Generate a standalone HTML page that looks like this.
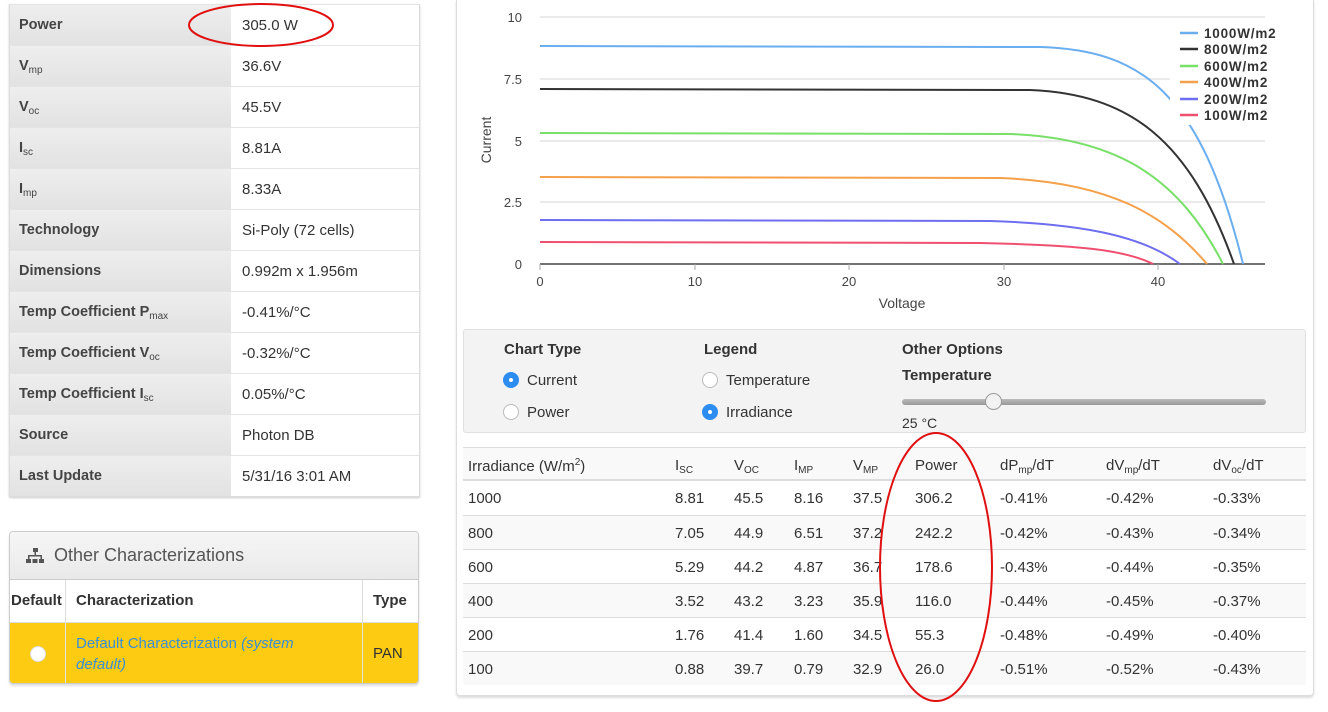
<!DOCTYPE html>
<html><head><meta charset="utf-8"><style>
*{margin:0;padding:0;box-sizing:border-box}
body{width:1328px;height:712px;background:#fff;font-family:"Liberation Sans",sans-serif;color:#333;position:relative;overflow:hidden;font-size:15px}
.a{position:absolute}
.lt{position:absolute;left:9px;top:4px;width:411px;border:1px solid #ddd;border-top:none;box-shadow:0 1px 2px #ccc}
.lt .r{height:41px;display:flex;border-top:1px solid #e4e4e4}
.lt .k{width:222px;background:linear-gradient(#eee,#e2e2e2);padding:12px 9px;font-weight:bold;color:#444;font-size:14.5px;border-right:1px solid #fff}
.lt .k sub{font-weight:normal}
.lt .v{flex:1;padding:12px 10px;font-size:15px}
sub{font-size:10px;vertical-align:-3px}
sup{font-size:10px}
.oc{position:absolute;left:9px;top:531px;width:410px;height:153px;border:1px solid #ccc;border-radius:4px;overflow:hidden;box-shadow:0 2px 2px #ddd}
.oc .h{height:48px;background:linear-gradient(#f6f6f6,#e9e9e9);border-bottom:1px solid #ccc;font-size:18px;color:#555;padding:13px 0 0 44px}
.rp{position:absolute;left:456px;top:0;width:858px;height:696px;border:1px solid #ddd;border-top:none;border-radius:0 0 4px 4px;box-shadow:0 2px 2px #ddd}
.ob{position:absolute;left:463px;top:329px;width:843px;height:104px;background:#f3f3f3;border:1px solid #e0e0e0;border-radius:3px}
.rad{position:absolute;width:16px;height:16px;border-radius:50%;border:1px solid #bbb;background:#fff}
.rad.on{background:#2d8cf0;border-color:#2d8cf0}
.rad.on:after{content:"";position:absolute;left:5px;top:5px;width:4px;height:4px;border-radius:50%;background:#fff}
.tb{position:absolute;left:463px;width:843px;height:34px;font-size:15px}
.tb span{position:absolute;top:9px}
</style></head><body>

<div class="lt">
<div class="r"><div class="k">Power</div><div class="v">305.0 W</div></div>
<div class="r"><div class="k">V<sub>mp</sub></div><div class="v">36.6V</div></div>
<div class="r"><div class="k">V<sub>oc</sub></div><div class="v">45.5V</div></div>
<div class="r"><div class="k">I<sub>sc</sub></div><div class="v">8.81A</div></div>
<div class="r"><div class="k">I<sub>mp</sub></div><div class="v">8.33A</div></div>
<div class="r"><div class="k">Technology</div><div class="v">Si-Poly (72 cells)</div></div>
<div class="r"><div class="k">Dimensions</div><div class="v">0.992m x 1.956m</div></div>
<div class="r"><div class="k">Temp Coefficient P<sub>max</sub></div><div class="v">-0.41%/°C</div></div>
<div class="r"><div class="k">Temp Coefficient V<sub>oc</sub></div><div class="v">-0.32%/°C</div></div>
<div class="r"><div class="k">Temp Coefficient I<sub>sc</sub></div><div class="v">0.05%/°C</div></div>
<div class="r"><div class="k">Source</div><div class="v">Photon DB</div></div>
<div class="r"><div class="k">Last Update</div><div class="v">5/31/16 3:01 AM</div></div>
</div>

<div class="oc">
<div class="h">Other Characterizations</div>
<svg class="a" style="left:16px;top:16px" width="18" height="16" viewBox="0 0 18 16"><rect x="7" y="0" width="5" height="4" fill="#555"/><rect x="8.5" y="4" width="1.5" height="4" fill="#555"/><rect x="2" y="7" width="14" height="1.5" fill="#555"/><rect x="2" y="7" width="1.5" height="4" fill="#555"/><rect x="14.5" y="7" width="1.5" height="4" fill="#555"/><rect x="0" y="11" width="5" height="4" fill="#555"/><rect x="6.5" y="11" width="5" height="4" fill="#555"/><rect x="13" y="11" width="5" height="4" fill="#555"/></svg>
<div class="a" style="left:0;top:48px;width:410px;height:42px;font-weight:bold;font-size:15px;color:#333">
<span class="a" style="left:1px;top:12px">Default</span>
<span class="a" style="left:66px;top:12px">Characterization</span>
<span class="a" style="left:363px;top:12px">Type</span>
<div class="a" style="left:55px;top:0;width:1px;height:42px;background:#ddd"></div>
<div class="a" style="left:352px;top:0;width:1px;height:42px;background:#ddd"></div>
</div>
<div class="a" style="left:0;top:90px;width:410px;height:63px;background:#fccb12;border-top:1px solid #ddd">
<div class="a" style="left:55px;top:0;width:1px;height:63px;background:#e6e6e6"></div>
<div class="a" style="left:352px;top:0;width:1px;height:63px;background:#e6e6e6"></div>
<div class="a" style="left:20px;top:23px;width:16px;height:16px;border-radius:50%;background:#fff;border:1px solid #ddd"></div>
<div class="a" style="left:66px;top:10px;color:#3a8fd6;font-size:15px;line-height:21px;width:250px">Default Characterization <i>(system default)</i></div>
<span class="a" style="left:363px;top:22px">PAN</span>
</div>
</div>

<div class="rp"></div>

<svg class="a" style="left:456px;top:0" width="858" height="320" viewBox="456 0 858 320" font-family="Liberation Sans, sans-serif">
<g stroke="#e3e3e3" stroke-width="1.5">
<line x1="540" y1="17" x2="1265" y2="17"/><line x1="540" y1="79" x2="1265" y2="79"/><line x1="540" y1="141" x2="1265" y2="141"/><line x1="540" y1="202" x2="1265" y2="202"/>
</g>
<line x1="540" y1="264" x2="1265" y2="264" stroke="#444" stroke-width="1.5"/>
<g stroke="#aaa"><line x1="540" y1="264" x2="540" y2="270"/><line x1="695" y1="264" x2="695" y2="270"/><line x1="849" y1="264" x2="849" y2="270"/><line x1="1004" y1="264" x2="1004" y2="270"/><line x1="1158" y1="264" x2="1158" y2="270"/></g>
<g fill="none" stroke-width="2">
<path d="M540 46 L1040 47 C1140 50 1200 90 1243 264" stroke="#6aaef0"/>
<path d="M540 89 L1030 90 C1130 94 1190 140 1234 264" stroke="#333"/>
<path d="M540 133 L1010 134 C1120 138 1180 180 1223 264" stroke="#78e068"/>
<path d="M540 177 L1000 178 C1110 182 1165 215 1207 264" stroke="#f5a04a"/>
<path d="M540 220 L990 221 C1090 224 1145 238 1180 264" stroke="#6e6ef0"/>
<path d="M540 242 L980 243 C1080 245 1125 250 1153 264" stroke="#f05070"/>
</g>
<rect x="1170" y="25" width="120" height="100" fill="#fff"/>
<g stroke-width="2.5">
<line x1="1180" y1="33" x2="1198" y2="33" stroke="#6aaef0"/>
<line x1="1180" y1="49" x2="1198" y2="49" stroke="#333"/>
<line x1="1180" y1="66" x2="1198" y2="66" stroke="#78e068"/>
<line x1="1180" y1="82" x2="1198" y2="82" stroke="#f5a04a"/>
<line x1="1180" y1="99" x2="1198" y2="99" stroke="#6e6ef0"/>
<line x1="1180" y1="115" x2="1198" y2="115" stroke="#f05070"/>
</g>
<g font-size="13.5" font-weight="bold" fill="#333" letter-spacing="0.8">
<text x="1204" y="38">1000W/m2</text><text x="1204" y="54">800W/m2</text><text x="1204" y="71">600W/m2</text><text x="1204" y="87">400W/m2</text><text x="1204" y="104">200W/m2</text><text x="1204" y="120">100W/m2</text>
</g>
<g font-size="13" fill="#444" text-anchor="end">
<text x="522" y="22">10</text><text x="522" y="84">7.5</text><text x="522" y="146">5</text><text x="522" y="207">2.5</text><text x="522" y="269">0</text>
</g>
<g font-size="13" fill="#444" text-anchor="middle">
<text x="540" y="286">0</text><text x="695" y="286">10</text><text x="849" y="286">20</text><text x="1004" y="286">30</text><text x="1158" y="286">40</text>
<text x="902" y="308" font-size="14">Voltage</text>
<text transform="translate(491 140) rotate(-90)" font-size="14">Current</text>
</g>
</svg>

<div class="ob">
<div class="a" style="left:40px;top:11px;font-weight:bold;font-size:15px">Chart Type</div>
<div class="rad on" style="left:39px;top:42px"></div><div class="a" style="left:63px;top:42px">Current</div>
<div class="rad" style="left:39px;top:74px"></div><div class="a" style="left:63px;top:74px">Power</div>
<div class="a" style="left:240px;top:11px;font-weight:bold;font-size:15px">Legend</div>
<div class="rad" style="left:238px;top:42px"></div><div class="a" style="left:262px;top:42px">Temperature</div>
<div class="rad on" style="left:238px;top:74px"></div><div class="a" style="left:262px;top:74px">Irradiance</div>
<div class="a" style="left:438px;top:11px;font-weight:bold;font-size:15px">Other Options</div>
<div class="a" style="left:438px;top:37px;font-weight:bold;font-size:15px">Temperature</div>
<div class="a" style="left:438px;top:69px;width:364px;height:6px;border-radius:3px;background:linear-gradient(#bbb,#999)"></div>
<div class="a" style="left:521px;top:63px;width:17px;height:17px;border-radius:50%;background:#f2f2f2;border:1px solid #999"></div>
<div class="a" style="left:438px;top:85px;font-size:14px">25 °C</div>
</div>

<div class="tb" style="top:447px;background:#f9f9f9;border-top:1px solid #ddd;border-bottom:2px solid #ddd">
<span style="left:5px">Irradiance (W/m<sup>2</sup>)</span><span style="left:212px">I<sub>SC</sub></span><span style="left:271px">V<sub>OC</sub></span><span style="left:331px">I<sub>MP</sub></span><span style="left:390px">V<sub>MP</sub></span><span style="left:452px">Power</span><span style="left:537px">dP<sub>mp</sub>/dT</span><span style="left:643px">dV<sub>mp</sub>/dT</span><span style="left:750px">dV<sub>oc</sub>/dT</span>
</div>
<div class="tb" style="top:481px"><span style="left:5px">1000</span><span style="left:212px">8.81</span><span style="left:271px">45.5</span><span style="left:331px">8.16</span><span style="left:390px">37.5</span><span style="left:452px">306.2</span><span style="left:537px">-0.41%</span><span style="left:643px">-0.42%</span><span style="left:750px">-0.33%</span></div>
<div class="tb" style="top:515px;background:#f9f9f9;border-top:1px solid #ddd"><span style="left:5px">800</span><span style="left:212px">7.05</span><span style="left:271px">44.9</span><span style="left:331px">6.51</span><span style="left:390px">37.2</span><span style="left:452px">242.2</span><span style="left:537px">-0.42%</span><span style="left:643px">-0.43%</span><span style="left:750px">-0.34%</span></div>
<div class="tb" style="top:549px;border-top:1px solid #ddd"><span style="left:5px">600</span><span style="left:212px">5.29</span><span style="left:271px">44.2</span><span style="left:331px">4.87</span><span style="left:390px">36.7</span><span style="left:452px">178.6</span><span style="left:537px">-0.43%</span><span style="left:643px">-0.44%</span><span style="left:750px">-0.35%</span></div>
<div class="tb" style="top:583px;background:#f9f9f9;border-top:1px solid #ddd"><span style="left:5px">400</span><span style="left:212px">3.52</span><span style="left:271px">43.2</span><span style="left:331px">3.23</span><span style="left:390px">35.9</span><span style="left:452px">116.0</span><span style="left:537px">-0.44%</span><span style="left:643px">-0.45%</span><span style="left:750px">-0.37%</span></div>
<div class="tb" style="top:617px;border-top:1px solid #ddd"><span style="left:5px">200</span><span style="left:212px">1.76</span><span style="left:271px">41.4</span><span style="left:331px">1.60</span><span style="left:390px">34.5</span><span style="left:452px">55.3</span><span style="left:537px">-0.48%</span><span style="left:643px">-0.49%</span><span style="left:750px">-0.40%</span></div>
<div class="tb" style="top:651px;background:#f9f9f9;border-top:1px solid #ddd"><span style="left:5px">100</span><span style="left:212px">0.88</span><span style="left:271px">39.7</span><span style="left:331px">0.79</span><span style="left:390px">32.9</span><span style="left:452px">26.0</span><span style="left:537px">-0.51%</span><span style="left:643px">-0.52%</span><span style="left:750px">-0.43%</span></div>

<svg class="a" style="left:0;top:0" width="1328" height="712">
<ellipse cx="261" cy="25" rx="72" ry="21" fill="none" stroke="#e01010" stroke-width="2"/>
<ellipse cx="936" cy="567" rx="56" ry="134" fill="none" stroke="#e01010" stroke-width="2"/>
</svg>
</body></html>
